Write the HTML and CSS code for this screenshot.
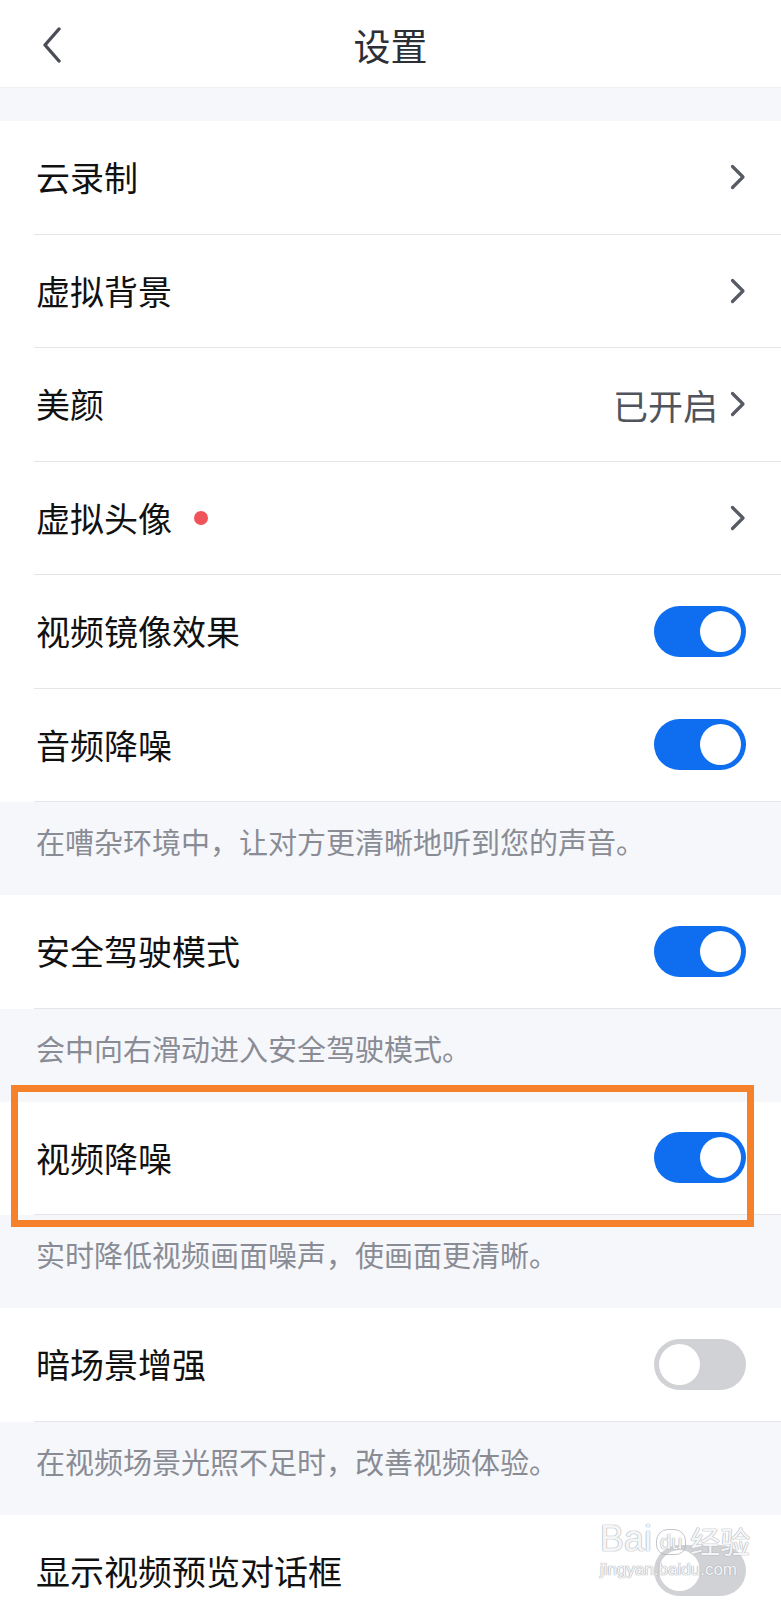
FILE: index.html
```html
<!DOCTYPE html>
<html lang="zh-CN">
<head>
<meta charset="utf-8">
<title>设置</title>
<link rel="stylesheet" href="styles.css">
</head>
<body>
<div class="page">
  <header class="topbar">
    <div class="back">
      <svg width="20" height="36" viewBox="0 0 20 36"><polyline points="17,2 3,18 17,34" fill="none" stroke="#4a4d55" stroke-width="3.4" stroke-linecap="round" stroke-linejoin="round"/></svg>
    </div>
    <h1 class="title">设置</h1>
    <div></div>
  </header>
  <div class="gap"></div>

  <section class="group">
    <div class="row"><div class="row-inner"><span class="label">云录制</span><span class="right"><svg class="chev" width="16" height="26" viewBox="0 0 16 26"><polyline points="2.5,2.5 13,13 2.5,23.5" fill="none" stroke="#575b63" stroke-width="3.2" stroke-linecap="round" stroke-linejoin="round"/></svg></span></div></div>
    <div class="row"><div class="row-inner"><span class="label">虚拟背景</span><span class="right"><svg class="chev" width="16" height="26" viewBox="0 0 16 26"><polyline points="2.5,2.5 13,13 2.5,23.5" fill="none" stroke="#575b63" stroke-width="3.2" stroke-linecap="round" stroke-linejoin="round"/></svg></span></div></div>
    <div class="row"><div class="row-inner"><span class="label">美颜</span><span class="right"><span class="value">已开启</span><svg class="chev" width="16" height="26" viewBox="0 0 16 26"><polyline points="2.5,2.5 13,13 2.5,23.5" fill="none" stroke="#575b63" stroke-width="3.2" stroke-linecap="round" stroke-linejoin="round"/></svg></span></div></div>
    <div class="row"><div class="row-inner"><span class="label">虚拟头像<span class="dot"></span></span><span class="right"><svg class="chev" width="16" height="26" viewBox="0 0 16 26"><polyline points="2.5,2.5 13,13 2.5,23.5" fill="none" stroke="#575b63" stroke-width="3.2" stroke-linecap="round" stroke-linejoin="round"/></svg></span></div></div>
    <div class="row"><div class="row-inner"><span class="label">视频镜像效果</span><span class="toggle on"><span class="knob"></span></span></div></div>
    <div class="row"><div class="row-inner"><span class="label">音频降噪</span><span class="toggle on"><span class="knob"></span></span></div></div>
  </section>
  <p class="desc">在嘈杂环境中，让对方更清晰地听到您的声音。</p>

  <section class="group">
    <div class="row"><div class="row-inner"><span class="label">安全驾驶模式</span><span class="toggle on"><span class="knob"></span></span></div></div>
  </section>
  <p class="desc">会中向右滑动进入安全驾驶模式。</p>

  <section class="group">
    <div class="row highlighted"><div class="row-inner"><span class="label">视频降噪</span><span class="toggle on"><span class="knob"></span></span></div><div class="mark"></div></div>
  </section>
  <p class="desc">实时降低视频画面噪声，使画面更清晰。</p>

  <section class="group">
    <div class="row"><div class="row-inner"><span class="label">暗场景增强</span><span class="toggle"><span class="knob"></span></span></div></div>
  </section>
  <p class="desc">在视频场景光照不足时，改善视频体验。</p>

  <section class="group">
    <div class="row last"><div class="row-inner"><span class="label">显示视频预览对话框</span><span class="toggle"><span class="knob"></span></span></div>
      <div class="watermark"><span class="wm-big">Bai<span class="wm-paw">du</span><span class="wm-cn">经验</span></span><span class="wm-small">jingyan.baidu.com</span></div>
    </div>
  </section>
</div>
</body>
</html>
```

FILE: styles.css
```css
* { box-sizing: border-box; }
html, body { margin: 0; padding: 0; }
body {
  background: #f6f7fa;
  font-family: "Noto Sans CJK SC", "Noto Sans", sans-serif;
  color: #111;
}
.page { width: 781px; height: 1600px; overflow: hidden; }

.topbar {
  height: 88px;
  background: #fff;
  display: grid;
  grid-template-columns: 120px 1fr 120px;
  align-items: center;
  border-bottom: 1px solid #eeeff2;
}
.back { padding-left: 42px; display: flex; align-items: center; padding-top: 3px; }
.title {
  margin: 0;
  text-align: center;
  font-size: 37px;
  font-weight: 400;
  color: #2d2f37;
  line-height: 1;
  padding-top: 4px;
}
.gap { height: 33px; }

.group { background: #fff; }
.row { position: relative; padding-left: 34px; background: #fff; }
.row-inner {
  height: 113.5px;
  display: flex;
  align-items: center;
  justify-content: space-between;
  padding-left: 2px;
  padding-right: 35px;
  border-bottom: 1px solid #e4e5e9;
}
.label {
  font-size: 34px;
  line-height: 1;
  color: #111;
  display: flex;
  align-items: center;
}
.dot {
  width: 14px;
  height: 14px;
  border-radius: 50%;
  background: #f0535a;
  margin-left: 22px;
}
.right { display: flex; align-items: center; }
.value { font-size: 35px; color: #50545c; margin-right: 12px; line-height: 1; }
.chev { display: block; }

.toggle {
  width: 92px;
  height: 51px;
  border-radius: 26px;
  background: #d1d2d6;
  padding: 5px;
  display: flex;
  justify-content: flex-start;
}
.toggle.on { background: #0f6ef0; justify-content: flex-end; }
.knob {
  width: 41px;
  height: 41px;
  border-radius: 50%;
  background: #fff;
}

.desc {
  margin: 0;
  height: 93px;
  padding: 20px 36px 0;
  font-size: 29px;
  line-height: 38px;
  color: #898c95;
}

.mark {
  position: absolute;
  top: -17px;
  left: 11px;
  right: 27px;
  bottom: -12px;
  border: 7px solid #f5822a;
  pointer-events: none;
}

.watermark {
  position: absolute;
  left: 600px;
  top: 4px;
  width: 160px;
  display: flex;
  flex-direction: column;
  font-family: "Liberation Sans", sans-serif;
  color: rgba(255,255,255,0.9);
  text-shadow: 0 0 1px #aeb1b8, 0 0 1px #aeb1b8, 0 0 1px #aeb1b8;
}
.wm-big { font-size: 36px; line-height: 40px; display: flex; align-items: flex-end; }
.wm-paw {
  font-size: 20px;
  line-height: 24px;
  margin: 0 4px 4px;
  padding: 0 3px;
  border: 1px solid rgba(170,173,180,0.7);
  border-radius: 12px 12px 10px 10px;
}
.wm-cn { font-family: "Noto Sans CJK SC", sans-serif; font-size: 30px; line-height: 38px; }
.wm-small { font-size: 17px; line-height: 22px; }
```
